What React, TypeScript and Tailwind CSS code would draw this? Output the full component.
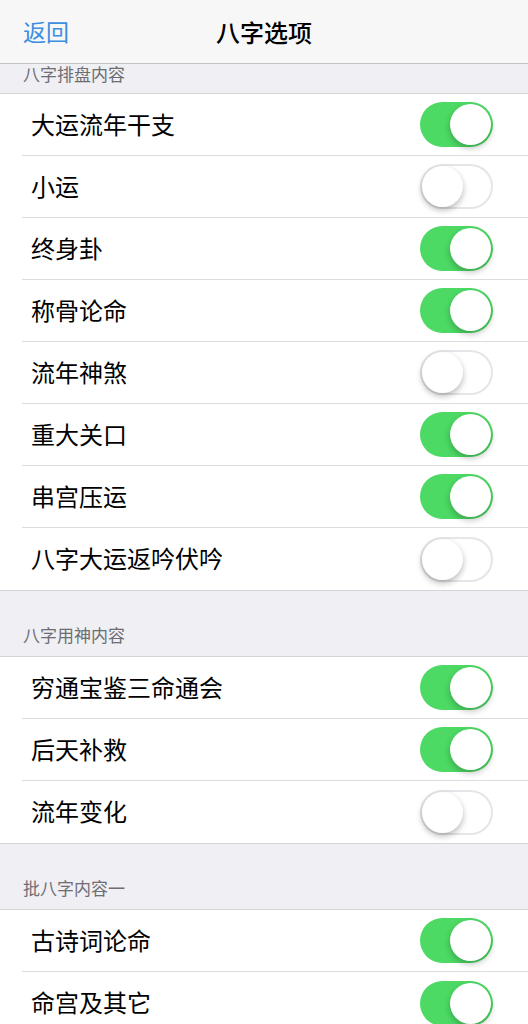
import React from "react";

type Item = { label: string; on: boolean };

const sections: { title: string; items: Item[]; first?: boolean }[] = [
  {
    title: "八字排盘内容",
    first: true,
    items: [
      { label: "大运流年干支", on: true },
      { label: "小运", on: false },
      { label: "终身卦", on: true },
      { label: "称骨论命", on: true },
      { label: "流年神煞", on: false },
      { label: "重大关口", on: true },
      { label: "串宫压运", on: true },
      { label: "八字大运返吟伏吟", on: false },
    ],
  },
  {
    title: "八字用神内容",
    items: [
      { label: "穷通宝鉴三命通会", on: true },
      { label: "后天补救", on: true },
      { label: "流年变化", on: false },
    ],
  },
  {
    title: "批八字内容一",
    items: [
      { label: "古诗词论命", on: true },
      { label: "命宫及其它", on: true },
    ],
  },
];

function Toggle({ on }: { on: boolean }) {
  return on ? (
    <div className="w-[73px] h-[45px] rounded-full bg-[#4cd964] flex items-center justify-end pr-[2px]">
      <div className="w-[41px] h-[41px] rounded-full bg-white shadow-[0_3px_6px_rgba(0,0,0,0.25)]" />
    </div>
  ) : (
    <div className="w-[73px] h-[45px] rounded-full bg-white border-2 border-[#e5e5ea] flex items-center justify-start">
      <div className="w-[41px] h-[41px] rounded-full bg-white shadow-[0_3px_6px_rgba(0,0,0,0.28)]" />
    </div>
  );
}

export default function App() {
  const font = { fontFamily: '"Noto Sans CJK SC", "Noto Sans", sans-serif' };
  return (
    <div className="w-[528px] h-[1024px] overflow-hidden bg-[#efeff4]" style={font}>
      <div className="h-[64px] bg-[#f7f7f8] border-b border-[#c4c4c8] flex items-center relative">
        <span className="absolute left-[23px] top-[14px] text-[23px] text-[#3b8ee0] leading-[34px]">返回</span>
        <div className="w-full text-center text-[24px] font-medium text-black leading-[34px]">八字选项</div>
      </div>
      {sections.map((s) => (
        <div key={s.title}>
          <div
            className={
              s.first
                ? "h-[30px] pl-[23px] flex items-start text-[17px] text-[#6d6d72] leading-[20px] border-b border-[#d4d4d8]"
                : "h-[67px] pl-[23px] flex items-end pb-[10px] text-[17px] text-[#6d6d72] leading-[22px] border-b border-[#d4d4d8] border-t"
            }
            style={s.first ? undefined : { borderTopColor: "#d4d4d8" }}
          >
            {s.title}
          </div>
          <div className="bg-white">
            {s.items.map((it, i) => (
              <div key={it.label} className="pl-[22px]">
                <div
                  className={
                    "h-[62px] flex items-center justify-between pr-[35px] " +
                    (i < s.items.length - 1 ? "border-b border-[#dcdce0]" : "")
                  }
                >
                  <span className="pl-[9px] text-[24px] text-black leading-[32px] -mt-[2px]">{it.label}</span>
                  <Toggle on={it.on} />
                </div>
              </div>
            ))}
          </div>
        </div>
      ))}
    </div>
  );
}
